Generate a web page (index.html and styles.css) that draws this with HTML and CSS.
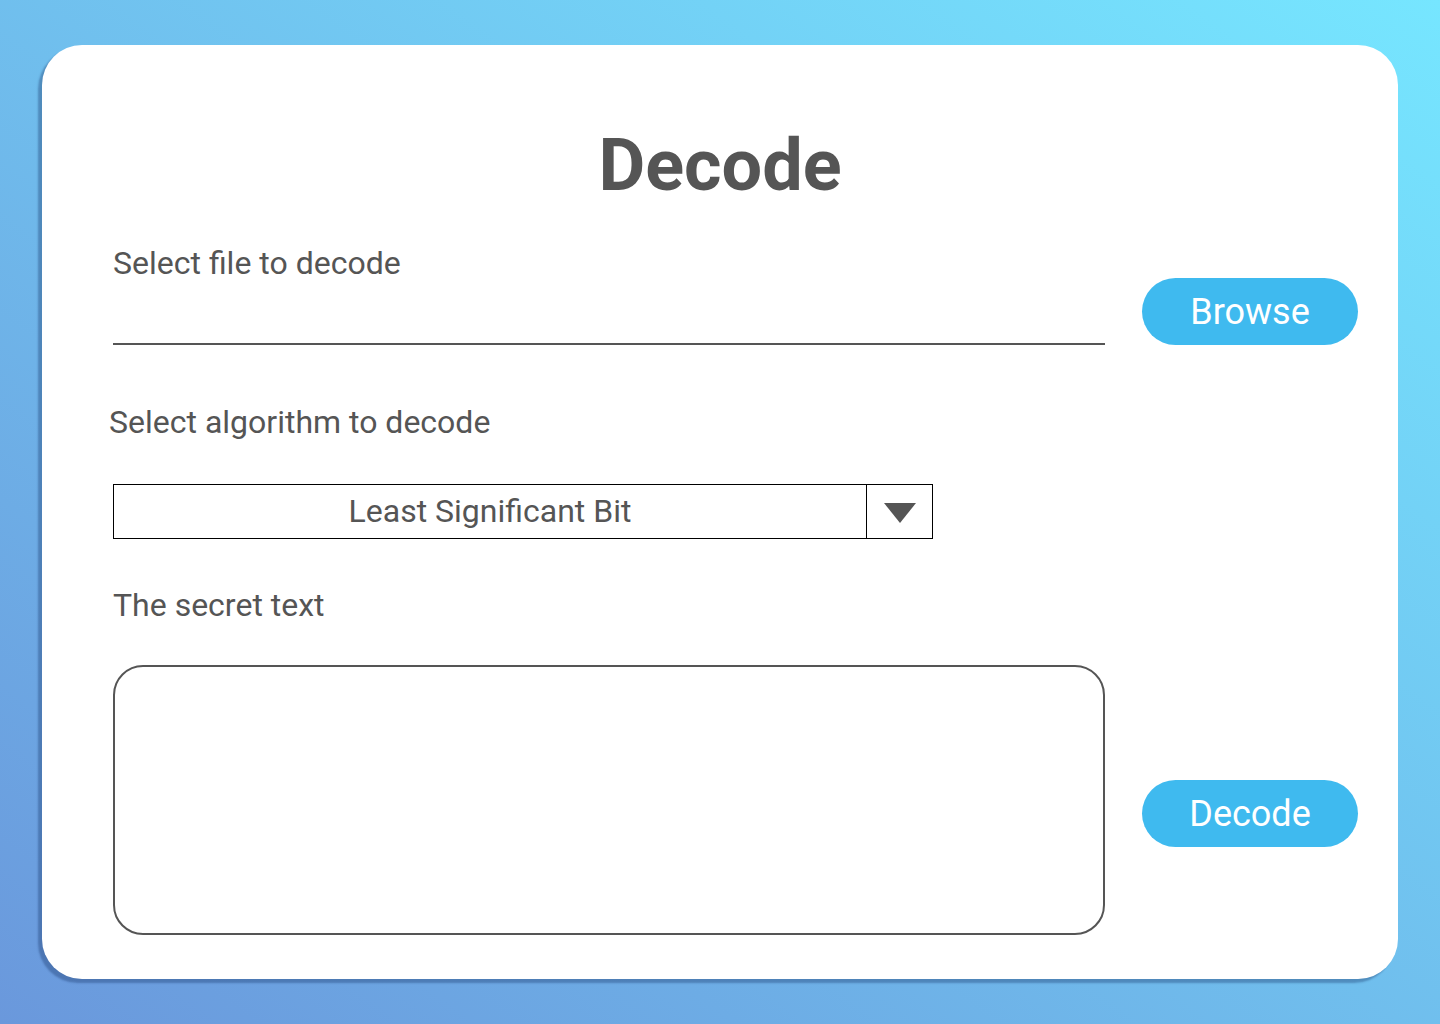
FILE: index.html
```html
<!DOCTYPE html>
<html lang="en">
<head>
<meta charset="utf-8">
<title>Decode</title>
<link rel="stylesheet" href="styles.css">
</head>
<body>
<main class="card">
  <h1 class="title">Decode</h1>
  <div class="row row-file">
    <div class="field">
      <label class="label">Select file to decode</label>
      <div class="file-input"></div>
    </div>
    <button class="btn">Browse</button>
  </div>
  <label class="label label-algo">Select algorithm to decode</label>
  <div class="select">
    <span class="select-value">Least Significant Bit</span>
    <span class="select-arrow">
      <svg width="32" height="20" viewBox="0 0 32 20"><polygon points="0,0 32,0 16,20" fill="#555"/></svg>
    </span>
  </div>
  <label class="label label-secret">The secret text</label>
  <div class="row row-secret">
    <div class="textarea"></div>
    <button class="btn btn-decode">Decode</button>
  </div>
</main>
</body>
</html>
```
FILE: styles.css
```css
html, body {
  margin: 0;
  padding: 0;
}
body {
  width: 1440px;
  height: 1024px;
  overflow: hidden;
  background: linear-gradient(to top right, #6a98dc 0%, #76e6ff 100%);
  font-family: Roboto, "Noto Sans", sans-serif;
  color: #555;
  padding-top: 45px;
  box-sizing: border-box;
}
.card {
  margin-left: 42px;
  width: 1356px;
  height: 934px;
  box-sizing: border-box;
  background: #fff;
  border-radius: 40px;
  box-shadow: -4px 4px 2px rgba(20, 50, 100, 0.35);
  padding: 76px 40px 40px 71px;
  display: flex;
  flex-direction: column;
}
.title {
  margin: 0 -40px 0 -71px;
  font-size: 72px;
  line-height: 90px;
  font-weight: 700;
  text-align: center;
}
.label {
  display: block;
  font-size: 32px;
  line-height: 36px;
  color: #555;
}
.row {
  display: flex;
  gap: 37px;
}
.row-file {
  margin-top: 34px;
  align-items: flex-end;
}
.field {
  width: 992px;
}
.file-input {
  height: 62px;
  border-bottom: 2px solid #555;
}
.btn {
  width: 216px;
  height: 67px;
  border: none;
  border-radius: 34px;
  background: #3fbaef;
  color: #fff;
  font-family: Roboto, "Noto Sans", sans-serif;
  font-size: 36px;
  padding: 0;
  flex: none;
}
.label-algo {
  margin-top: 59px;
  margin-left: -4px;
}
.select {
  margin-top: 44px;
  width: 820px;
  height: 55px;
  box-sizing: border-box;
  border: 1px solid #000;
  display: flex;
}
.select-value {
  flex: 1;
  text-align: center;
  font-size: 32px;
  line-height: 53px;
  color: #555;
}
.select-arrow {
  width: 65px;
  border-left: 1px solid #000;
  display: flex;
  align-items: center;
  justify-content: center;
}
.select-arrow svg {
  display: block;
  margin-top: 2px;
}
.label-secret {
  margin-top: 48px;
}
.row-secret {
  margin-top: 42px;
  align-items: flex-start;
}
.textarea {
  width: 992px;
  height: 270px;
  box-sizing: border-box;
  border: 2px solid #555;
  border-radius: 30px;
}
.btn-decode {
  margin-top: 115px;
}
```
